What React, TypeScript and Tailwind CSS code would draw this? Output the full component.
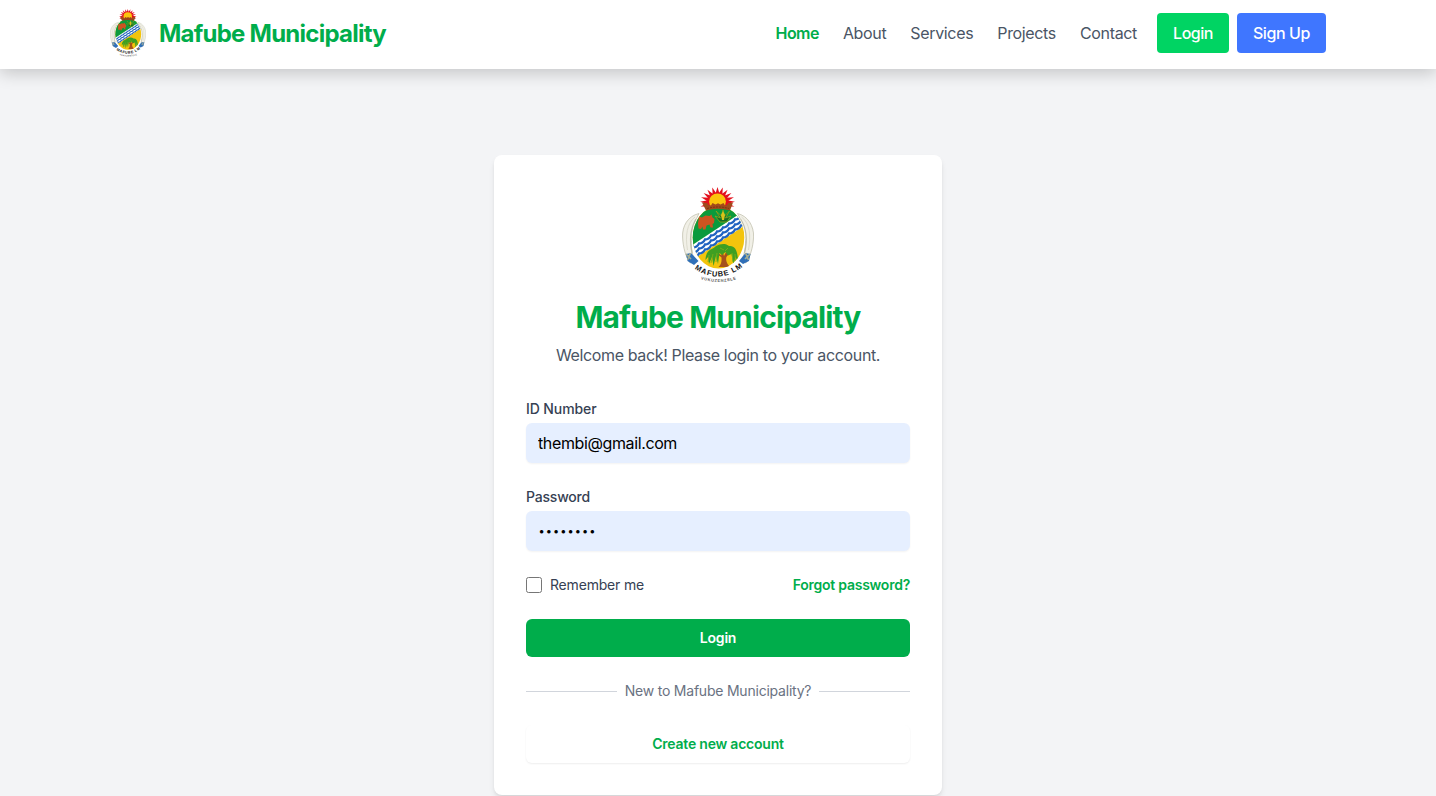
import React, { useId } from "react";

const RAYS = Array.from({ length: 13 }, (_, i) => {
  const a = ((-195 + (i * 210) / 12) * Math.PI) / 180;
  const w = 0.2;
  const point = (r: number, t: number) =>
    `${(35.5 + 1.12 * r * Math.cos(t)).toFixed(2)},${(15.5 + r * Math.sin(t)).toFixed(2)}`;
  return `${point(9, a - w)} ${point(15.6, a)} ${point(9, a + w)}`;
});

function Crest({ className }: { className: string }) {
  const id = useId();
  const shield = `${id}-shield`;
  const motto = `${id}-motto`;
  const sub = `${id}-sub`;
  return (
    <svg viewBox="0 0 72 96" className={className} role="img" aria-label="Mafube crest">
      <defs>
        <clipPath id={shield}>
          <ellipse cx="36.5" cy="50.500" rx="25.8" ry="31" />
        </clipPath>
        <path id={motto} d="M8 78.500 Q36.5 101.500 65 76.500" />
        <path id={sub} d="M17 91.500 Q36.5 98.500 56 91.500" />
      </defs>

      {RAYS.map((p) => (
        <polygon key={p} points={p} fill="#e3101c" />
      ))}
      <ellipse cx="35.5" cy="15.5" rx="11" ry="10" fill="#e3101c" />
      <ellipse cx="35.5" cy="14.5" rx="8.4" ry="8" fill="#fbc40c" />

      <path
        d="M17 26.500 C6 29 0 39 0.6 50 C1 61 4 70 8 76 L13 74 C8 64 7 45 17 26.500Z"
        fill="#f1f0e7"
        stroke="#c3c2b0"
        strokeWidth=".8"
      />
      <path d="M13 30 C5 36 3 49 5.5 63" fill="none" stroke="#dddccf" strokeWidth="1" />
      <path d="M14 32 C8 42 7 52 10 66" fill="none" stroke="#bdbca6" strokeWidth="1.2" />
      <path
        d="M55.500 26.500 C66 29 72 39 71.6 50 C71 61 68 70 64 76 L59 74 C65 64 66 45 55.500 26.500Z"
        fill="#f1f0e7"
        stroke="#c3c2b0"
        strokeWidth=".8"
      />
      <path d="M59.500 30 C68 36 69 49 66.5 63" fill="none" stroke="#dddccf" strokeWidth="1" />
      <path d="M58.500 32 C65 42 66 52 62.5 66" fill="none" stroke="#bdbca6" strokeWidth="1.2" />

      <path d="M4 67 L9 66 L16.500 74 L12 78 L5.500 74Z" fill="#2f6fb8" />
      <path d="M68.500 67 L63.500 66 L57 74 L61 77 L67 74Z" fill="#2f6fb8" />
      <path d="M4 67 l5 5 M8.5 66 l-3 7 M68 67 l-5 5 M63.5 66 l3 7" stroke="#a5ad92" strokeWidth="1.6" />

      <ellipse cx="36.5" cy="51.200" rx="26.8" ry="32.600" fill="#fff" />
      <g clipPath={`url(#${shield})`}>
        <rect x="8" y="18" width="58" height="70" fill="#f3c40d" />
        <path d="M8 18 H66 V24 L8 62Z" fill="#0b9a3c" />
        <path d="M8 59.500 L66 21.300 V36.300 L8 74.500Z" fill="#fff" />
        <g fill="none" stroke="#1f62c0" strokeWidth="2.3">
          <path d="M6 63.500 q3 .3 5-3 q4 0 6-4 q4 0 6-4 q4 0 6-4 q4 0 6-4 q4 0 6-4 q4 0 6-4 q4 0 6-4 q4 0 6-4 q4 0 6-4" />
          <path d="M6 68.500 q3 .3 5-3 q4 0 6-4 q4 0 6-4 q4 0 6-4 q4 0 6-4 q4 0 6-4 q4 0 6-4 q4 0 6-4 q4 0 6-4 q4 0 6-4" />
          <path d="M6 73.500 q3 .3 5-3 q4 0 6-4 q4 0 6-4 q4 0 6-4 q4 0 6-4 q4 0 6-4 q4 0 6-4 q4 0 6-4 q4 0 6-4 q4 0 6-4" />
        </g>
        <path d="M40 62 C38 68 42 75 36.500 80 H48 C43 75 43 70 47 64 L45 63 L42 69Z" fill="#a6521c" />
        <path d="M33 65 L42 71 L51 62" fill="none" stroke="#a6521c" strokeWidth="1.6" />
        <path
          d="M23.500 73 C24 61 31 63 34 59 C38 56.500 44 56 47 59 C53 58 56 64 56 75 L53.500 70 L51.500 78 L49.500 67 L46 68.500 L43.500 65 L40 68 L37.500 66 L36 77 L34 69 L31.500 79 L30 70 L27 77 L26 70Z"
          fill="#3f9f22"
        />
        <path
          d="M31 67 l-2 9 M35 66 l-1 9 M50 66 l1 9 M53 67 l.5 9 M27 68 l-1 7 M38 61 l4 2 M46 61 l-3 3"
          fill="none"
          stroke="#7dad18"
          strokeWidth=".9"
        />
      </g>

      <path
        d="M17 29.500 l3 1 l3.500-2 l4 .5 l2-1.500 l1 3 l2 1.500 l-.5 4 l-1.500 1 l.5 3.500 h-2.500 l-1-3 l-3 1 l-1 4 h-2.500 l-.5-3 l-1.500 2.500 l-2.500-.5 l-.5-5z"
        fill="#cc5420"
      />
      <path
        d="M34 24 L38.500 31 L33 29 L38 35 H45 L49 29 L43.500 31 L47.500 24 L42.500 29 L41 23 L39.500 29Z"
        fill="#156f24"
        stroke="#8fa51c"
        strokeWidth=".8"
      />
      <path d="M41 24 L43 28 L42 33 H40 L39 28Z" fill="#d9c31a" />

      <path
        d="M20 15.500 L25 16 L26.500 18 L29 18.500 L30.500 16 L33.500 17.500 L36 16.200 L38.500 17.500 L41.500 16 L43 18.500 L45 18 L46.500 16 L51 15.500 L48 23.500 Q36 20 24 23.500Z"
        fill="#a04a1b"
      />
      <path d="M25 21.500 Q36 18.500 47 21.500" fill="none" stroke="#70300f" strokeWidth=".8" strokeDasharray="2 1" />

      <text fill="#111" fontSize="7.4" fontWeight="700" fontFamily="Liberation Sans, sans-serif">
        <textPath href={`#${motto}`} startOffset="50%" textAnchor="middle" textLength="52">
          MAFUBE LM
        </textPath>
      </text>
      <text fill="#555" fontSize="4" fontWeight="700" fontFamily="Liberation Sans, sans-serif">
        <textPath href={`#${sub}`} startOffset="50%" textAnchor="middle" textLength="36">
          VUKUZENZELE
        </textPath>
      </text>
    </svg>
  );
}

const LINKS = ["Home", "About", "Services", "Projects", "Contact"];

function Header() {
  return (
    <header className="relative h-[69px] shrink-0 bg-white pb-[3px] shadow-[0_4px_16px_rgba(0,0,0,0.2)]">
      <div className="mx-auto flex h-full max-w-7xl items-center justify-between px-8">
        <a href="#" className="flex items-center gap-[13px]">
          <Crest className="h-12 w-9" />
          <span className="pt-0.5 text-2xl font-bold tracking-[-0.76px] text-[#00ad4b]">Mafube Municipality</span>
        </a>
        <div className="flex items-center">
          <nav className="mr-5 flex gap-6">
            {LINKS.map((label, i) => (
              <a
                key={label}
                href="#"
                className={
                  i === 0
                    ? "font-semibold tracking-[-0.55px] text-[#00ad4b]"
                    : "tracking-[-0.34px] text-[#4a5565]"
                }
              >
                {label}
              </a>
            ))}
          </nav>
          <button className="mr-2 flex h-10 w-[72px] items-center justify-center rounded bg-[#00d463] font-medium tracking-[-0.5px] text-white">
            Login
          </button>
          <button className="flex h-10 w-[89px] items-center justify-center rounded bg-[#3f76ff] font-medium tracking-[-0.4px] text-white">
            Sign Up
          </button>
        </div>
      </div>
    </header>
  );
}

export default function App() {
  return (
    <div className="flex h-[796px] flex-col overflow-hidden bg-[#f3f4f6] font-['Inter',sans-serif] text-base">
      <Header />
      <main className="flex flex-1 items-start justify-center pt-[86px]">
        <section className="w-[448px] rounded-lg bg-white p-8 shadow-md">
          <Crest className="mx-auto h-24 w-[72px]" />
          <h1 className="mt-4 text-center text-3xl leading-9 font-bold tracking-[-0.87px] text-[#00ad4b]">
            Mafube Municipality
          </h1>
          <p className="mt-2 text-center leading-6 tracking-[-0.36px] text-[#4a5565]">
            Welcome back! Please login to your account.
          </p>
          <form className="mt-8 flex flex-col gap-6" onSubmit={(e) => e.preventDefault()}>
            <label className="block text-sm leading-5 font-medium tracking-[-0.1px] text-[#364153]">
              ID Number
              <input
                type="text"
                defaultValue="thembi@gmail.com"
                className="mt-1 block h-10 w-full rounded-md bg-[#e6efff] px-3 text-base font-normal tracking-[-0.38px] text-black shadow-xs outline-none"
              />
            </label>
            <label className="block text-sm leading-5 font-medium tracking-[-0.2px] text-[#364153]">
              Password
              <input
                type="password"
                defaultValue="password"
                className="mt-1 block h-10 w-full rounded-md bg-[#e6efff] pr-3 pl-[12.5px] text-[11px] font-normal tracking-[1.05px] text-black shadow-xs outline-none"
              />
            </label>
            <div className="flex h-5 items-center justify-between text-sm">
              <label className="flex items-center gap-2 tracking-[-0.19px] text-[#364153]">
                <input
                  type="checkbox"
                  className="size-4 appearance-none rounded-[2.5px] border border-[#767676] bg-white"
                />
                Remember me
              </label>
              <a href="#" className="font-semibold tracking-[-0.25px] text-[#00ad4b]">
                Forgot password?
              </a>
            </div>
            <button className="h-[38px] rounded-md bg-[#00ad4b] text-sm font-semibold tracking-[-0.2px] text-white">
              Login
            </button>
          </form>
          <div className="mt-6 flex h-5 items-center gap-2 text-sm">
            <div className="mt-px h-px flex-1 bg-[#d1d5dc]" />
            <span className="tracking-[-0.22px] text-[#6a7282]">New to Mafube Municipality?</span>
            <div className="mt-px h-px flex-1 bg-[#d1d5dc]" />
          </div>
          <button className="mt-6 h-[38px] w-full rounded-md bg-white text-sm font-semibold tracking-[-0.22px] text-[#00ad4b] shadow-[0_1px_2px_rgba(0,0,0,0.07)]">
            Create new account
          </button>
        </section>
      </main>
    </div>
  );
}
